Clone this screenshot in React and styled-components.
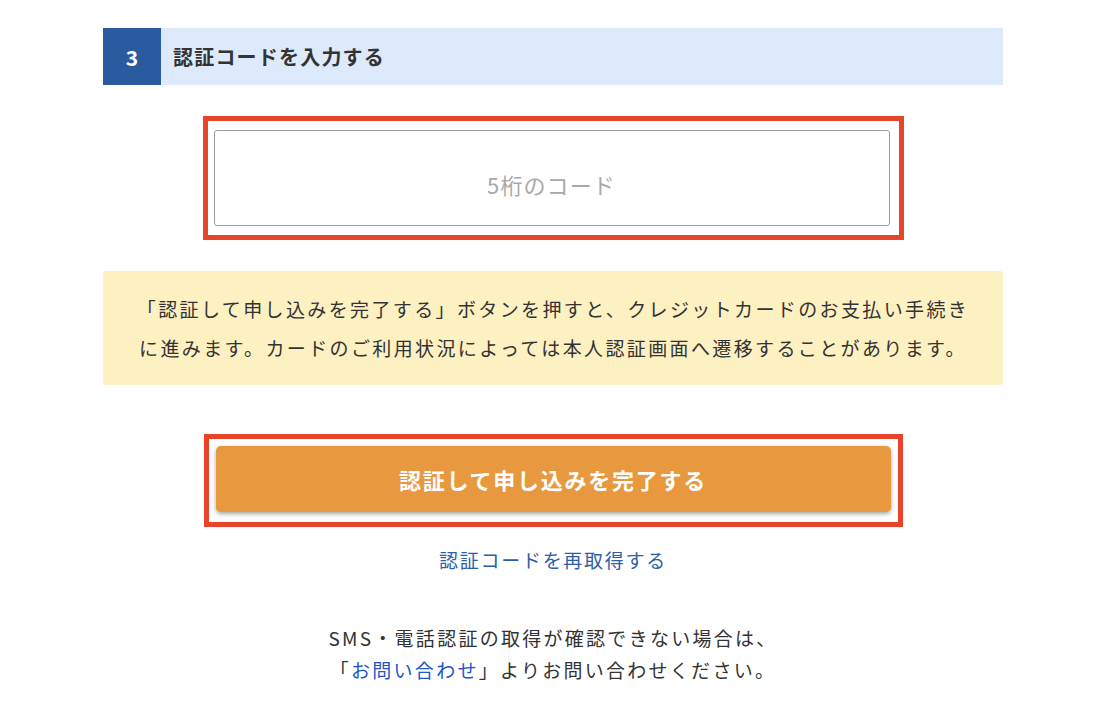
import React from 'react';
import styled, {createGlobalStyle} from 'styled-components';

const GlobalStyle = createGlobalStyle`
  * {
    box-sizing: border-box;
  }
  body {
    margin: 0;
    background: #fff;
    font-family: "Noto Sans CJK JP", "Noto Sans", sans-serif;
    color: #333;
  }
`;

const Page = styled.main`
  width: 900px;
  margin: 0 auto;
  padding-top: 28px;
  padding-bottom: 40px;
  display: flex;
  flex-direction: column;
  align-items: center;
`;

const StepHeader = styled.div`
  display: flex;
  align-items: center;
  width: 100%;
  height: 57px;
  background-color: #dceafb;
`;

const StepNumber = styled.div`
  display: flex;
  justify-content: center;
  align-items: center;
  width: 58px;
  height: 100%;
  background-color: #2b5b9f;
  color: #fff;
  font-size: 21px;
  font-weight: bold;
`;

const StepTitle = styled.h2`
  margin: 0 0 0 12px;
  font-size: 20px;
  font-weight: bold;
  letter-spacing: 0.06em;
  color: #333;
`;

const Highlight = styled.div`
  width: ${({w}) => w}px;
  margin-top: ${({top}) => top}px;
  border: 5px solid #e9432a;
  padding: ${({pad}) => pad};
`;

const CodeInput = styled.input`
  display: block;
  width: 100%;
  height: 96px;
  padding: 12px 0 0;
  border: 1px solid #9a9a9a;
  border-radius: 3px;
  font-family: inherit;
  font-size: 22px;
  letter-spacing: 0.05em;
  text-align: center;
  color: #333;
  outline: none;

  &::placeholder {
    color: #a8a8a8;
  }
`;

const Notice = styled.p`
  width: 100%;
  margin: 31px 0 0;
  padding: 18px 10px;
  background-color: #fdf0c1;
  border-radius: 3px;
  font-size: 19px;
  line-height: 39px;
  letter-spacing: 0.125em;
  text-align: center;
  color: #333;
`;

const SubmitButton = styled.button`
  display: block;
  width: 100%;
  height: 66px;
  border: none;
  border-radius: 5px;
  background-color: #e8983e;
  box-shadow: 0 2px 4px rgba(0, 0, 0, 0.35);
  color: #fff;
  font-family: inherit;
  font-size: 22px;
  font-weight: bold;
  letter-spacing: 0.08em;
  cursor: pointer;
`;

const ResendLink = styled.a`
  margin-top: 18px;
  font-size: 19px;
  line-height: 30px;
  letter-spacing: 0.09em;
  color: #2e5ea6;
  text-decoration: none;
`;

const HelpText = styled.p`
  margin: 47px 0 0;
  font-size: 19px;
  line-height: 32px;
  letter-spacing: 0.12em;
  text-align: center;
  color: #333;
`;

const ContactLink = styled.a`
  color: #2355c6;
  text-decoration: none;
`;

const App = () => {
    return (
        <>
            <GlobalStyle/>
            <Page>
                <StepHeader>
                    <StepNumber>3</StepNumber>
                    <StepTitle>認証コードを入力する</StepTitle>
                </StepHeader>

                <Highlight w={701} top={31} pad="9px 9px 9px 6px">
                    <CodeInput type="text" placeholder="5桁のコード"/>
                </Highlight>

                <Notice>
                    「認証して申し込みを完了する」ボタンを押すと、クレジットカードのお支払い手続き<br/>
                    に進みます。カードのご利用状況によっては本人認証画面へ遷移することがあります。
                </Notice>

                <Highlight w={699} top={49} pad="7px 7px 10px">
                    <SubmitButton>認証して申し込みを完了する</SubmitButton>
                </Highlight>

                <ResendLink href="#">認証コードを再取得する</ResendLink>

                <HelpText>
                    SMS・電話認証の取得が確認できない場合は、<br/>
                    「<ContactLink href="#">お問い合わせ</ContactLink>」よりお問い合わせください。
                </HelpText>
            </Page>
        </>
    );
};

export default App;
